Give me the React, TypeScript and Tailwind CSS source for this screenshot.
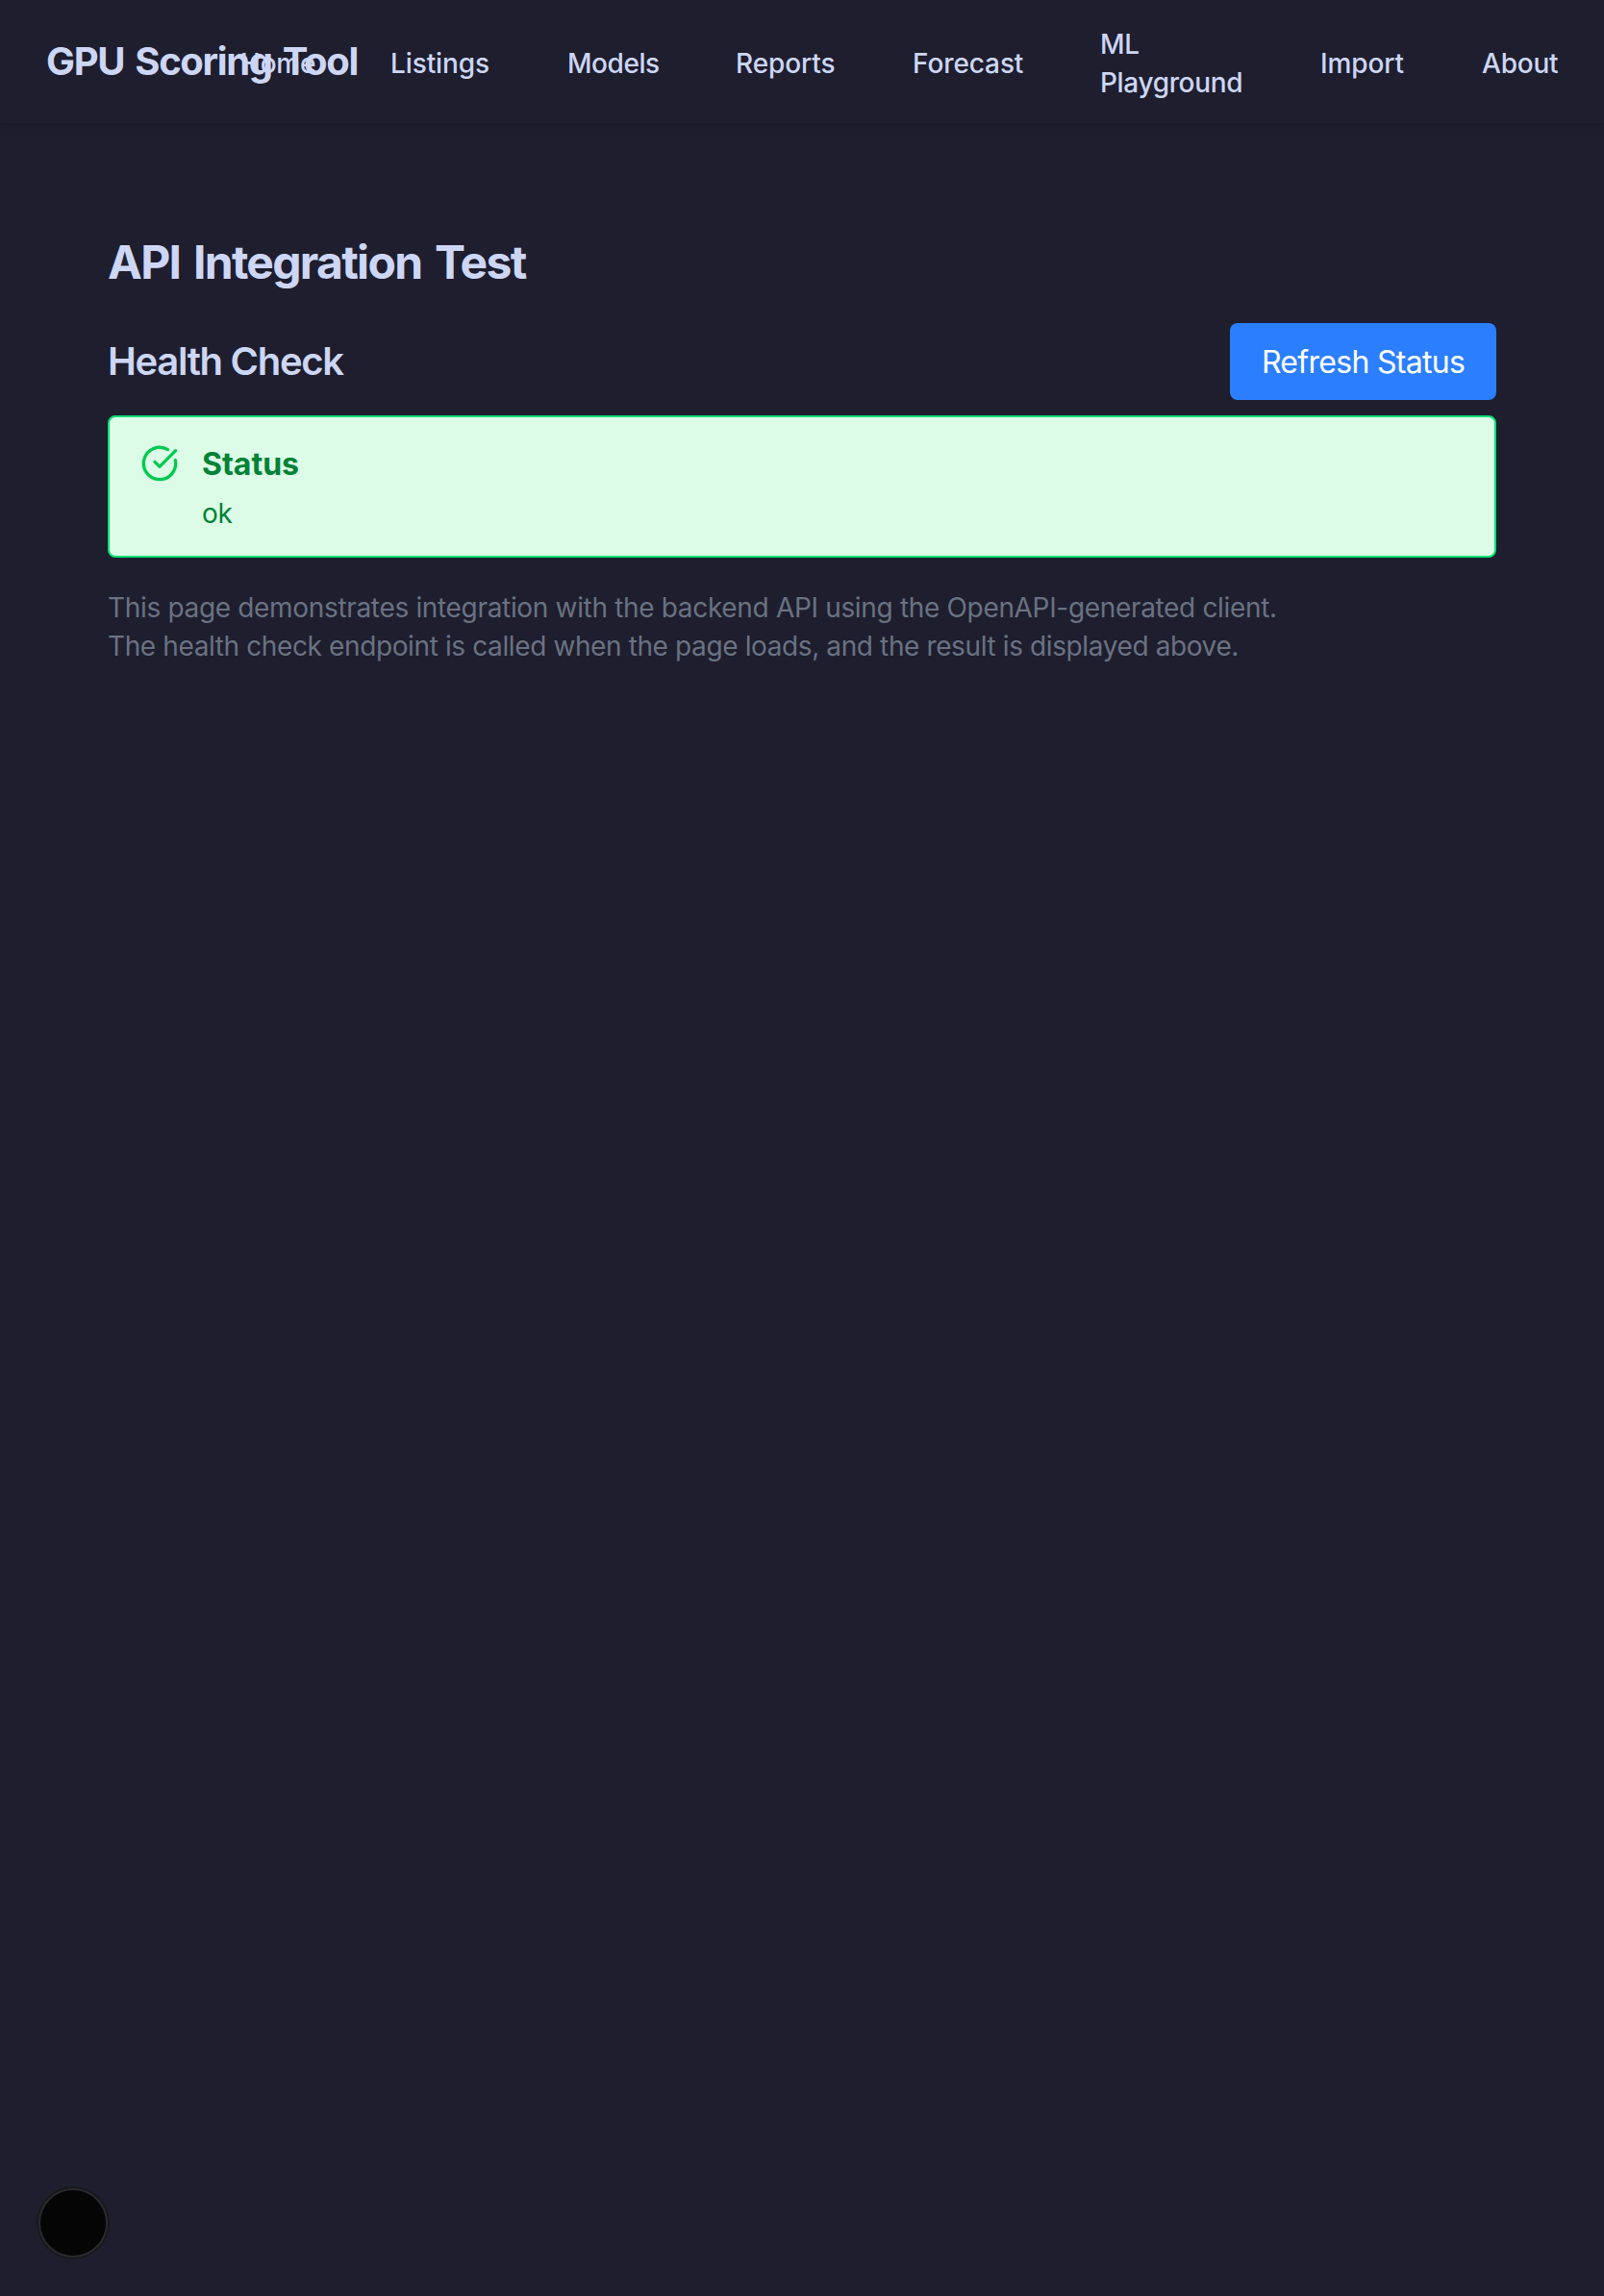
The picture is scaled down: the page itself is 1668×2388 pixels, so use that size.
import React from "react";

const links = [
  { label: "Home", style: "w-[76px] tracking-[-0.2px]" },
  { label: "Listings", style: "w-[104px] tracking-[-0.1px]" },
  { label: "Models", style: "w-[95px] tracking-[-0.45px]" },
  { label: "Reports", style: "w-[104px] tracking-[-0.1px]" },
  { label: "Forecast", style: "w-[115px] tracking-[-0.1px]" },
  { label: "ML Playground", style: "w-[149px] tracking-[-0.35px] whitespace-normal" },
  { label: "Import", style: "w-[88px] tracking-[-0.1px]" },
  { label: "About", style: "w-[79px] tracking-[-0.2px]" },
];

export default function App() {
  return (
    <div className="relative min-h-[2388px] w-[1668px] bg-[#1e1e2e] font-['Inter',sans-serif] text-[#cdd6f4]">
      <header className="flex h-32 items-center justify-between px-12 shadow-[0_2px_6px_rgba(0,0,0,0.1),0_2px_4px_-2px_rgba(0,0,0,0.1)]">
        <div className="w-[200px] min-w-0 whitespace-nowrap text-[40px] leading-[56px] font-bold tracking-[-1.35px] [word-spacing:3px]">GPU Scoring Tool</div>
        <nav className="flex shrink-0 items-center gap-20 pt-1 text-[28px] leading-10 font-medium whitespace-nowrap">
          {links.map((l) => (
            <a key={l.label} className={l.style}>{l.label}</a>
          ))}
        </nav>
      </header>
      <main className="px-28 pt-28">
        <h1 className="pt-px text-[48px] leading-[64px] font-bold tracking-[-1.7px] [word-spacing:4px]">API Integration Test</h1>
        <div className="mt-[31px] flex h-20 items-center justify-between">
          <h2 className="text-[40px] leading-[56px] font-semibold tracking-[-1.3px]">Health Check</h2>
          <button className="h-20 w-[277px] rounded-lg bg-[#2b7fff] pt-0.5 text-[32px] leading-[48px] tracking-[-0.7px] whitespace-nowrap text-white">Refresh Status</button>
        </div>
        <section className="mt-4 flex h-[148px] rounded-lg border-2 border-[#05df72] bg-[#dcfce7] px-8 pt-6 text-[#008236]">
          <svg className="mt-1 size-10 text-[#00c950]" viewBox="0 0 24 24" fill="none" stroke="currentColor" strokeWidth="2" strokeLinecap="round" strokeLinejoin="round">
            <path d="M21.801 10A10 10 0 1 1 17 3.335" />
            <path d="m9 11 3 3L22 4" />
          </svg>
          <div className="ml-6">
            <div className="pt-px text-[32px] leading-[48px] font-bold">Status</div>
            <div className="mt-[7px] text-[28px] leading-10 tracking-[-0.3px]">ok</div>
          </div>
        </section>
        <div className="mt-8 text-[28px] leading-10 whitespace-nowrap text-[#6a7282]">
          <p className="tracking-[-0.33px]">This page demonstrates integration with the backend API using the OpenAPI-generated client.</p>
          <p className="tracking-[-0.385px]">The health check endpoint is called when the page loads, and the result is displayed above.</p>
        </div>
      </main>
      <div className="absolute top-[2276px] left-10 size-[72px] rounded-full border-2 border-[#2a2a2e] bg-[#050506] shadow-[0_0_0_2px_#19191c]" />
    </div>
  );
}
